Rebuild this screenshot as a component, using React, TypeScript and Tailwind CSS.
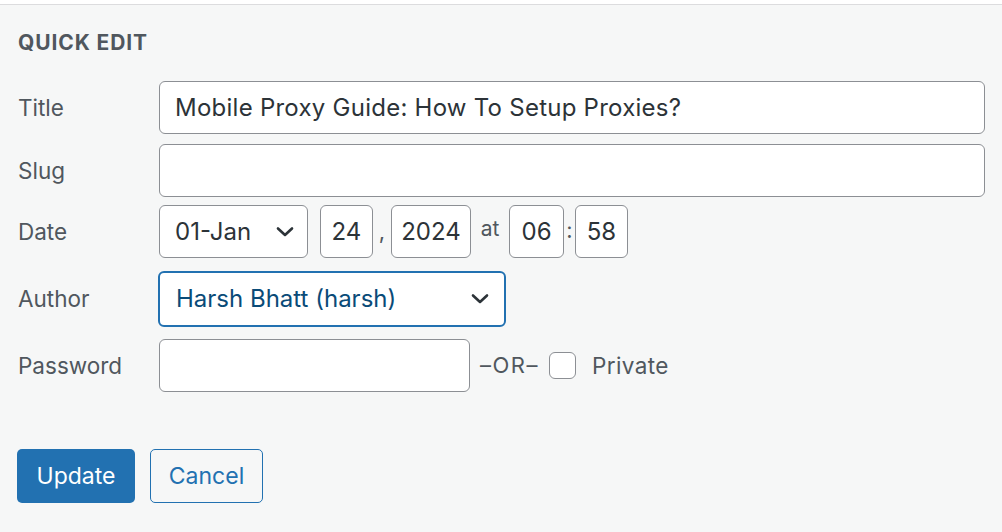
import { JSX } from "react";

function Chevron({ color = "#2c3338" }: { color?: string }): JSX.Element {
  return (
    <svg width="20" height="12" viewBox="0 0 20 12" fill="none" className="shrink-0">
      <path d="M3 2.5 L10 9 L17 2.5" stroke={color} strokeWidth="2.6" strokeLinecap="round" strokeLinejoin="round" />
    </svg>
  );
}

function Box({ w, children }: { w: string; children?: React.ReactNode }): JSX.Element {
  return (
    <div className={`${w} h-[53px] flex items-center justify-center bg-white border border-[#8c8f94] rounded-[6px] text-[24px] text-[#2c3338]`}>
      {children}
    </div>
  );
}

export default function App(): JSX.Element {
  return (
    <div
      className="w-[1002px] h-[532px] bg-white pt-[4px]"
      style={{ fontFamily: "Inter, 'Noto Sans', 'Liberation Sans', sans-serif" }}
    >
      <div className="h-full bg-[#f6f7f7] border-t border-[#dcdcde] pl-[18px] pr-[17px]">
        <div className="pt-[22px] h-[76px] text-[21px] font-bold text-[#50575e] tracking-[0.9px]">
          QUICK EDIT
        </div>

        {/* Title */}
        <div className="flex items-center">
          <div className="w-[141px] text-[22.5px] text-[#50575e]">Title</div>
          <div className="flex-1 h-[53px] flex items-center pl-[15px] bg-white border border-[#8c8f94] rounded-[6px] text-[24px] tracking-[0.25px] text-[#2c3338]">
            Mobile Proxy Guide: How To Setup Proxies?
          </div>
        </div>

        {/* Slug */}
        <div className="flex items-center mt-[10px]">
          <div className="w-[141px] text-[22.5px] text-[#50575e]">Slug</div>
          <div className="flex-1 h-[53px] bg-white border border-[#8c8f94] rounded-[6px]" />
        </div>

        {/* Date */}
        <div className="flex items-center mt-[8px]">
          <div className="w-[141px] text-[22.5px] text-[#50575e]">Date</div>
          <div className="w-[149px] h-[53px] flex items-center justify-between pl-[15px] pr-[12px] bg-white border border-[#8c8f94] rounded-[6px] text-[24px] text-[#2c3338]">
            <span>01-Jan</span>
            <Chevron />
          </div>
          <div className="ml-[12px]">
            <Box w="w-[53px]">24</Box>
          </div>
          <span className="w-[18px] text-center text-[22px] text-[#50575e]">,</span>
          <Box w="w-[80px]">2024</Box>
          <span className="w-[38px] text-center text-[21px] text-[#50575e] pb-[6px]">at</span>
          <Box w="w-[55px]">06</Box>
          <span className="w-[11px] text-center text-[22px] text-[#50575e] pb-[2px]">:</span>
          <Box w="w-[53px]">58</Box>
        </div>

        {/* Author */}
        <div className="flex items-center mt-[13px]">
          <div className="w-[140px] text-[22.5px] text-[#50575e]">Author</div>
          <div className="w-[348px] h-[56px] flex items-center justify-between pl-[16px] pr-[14px] bg-white border-2 border-[#2271b1] rounded-[6px] text-[24px] text-[#0a4b78]">
            <span>Harsh Bhatt (harsh)</span>
            <Chevron />
          </div>
        </div>

        {/* Password */}
        <div className="flex items-center mt-[12px]">
          <div className="w-[141px] text-[22.5px] text-[#50575e]">Password</div>
          <div className="w-[311px] h-[53px] bg-white border border-[#8c8f94] rounded-[6px]" />
          <span className="ml-[10px] text-[22px] text-[#50575e] tracking-[1.5px]">–OR–</span>
          <div className="ml-[10px] w-[27px] h-[27px] bg-white border border-[#8c8f94] rounded-[6px]" />
          <span className="ml-[16px] text-[22.5px] tracking-[0.4px] text-[#50575e]">Private</span>
        </div>

        {/* Buttons */}
        <div className="flex items-center mt-[57px] gap-[15px] -ml-[1px]">
          <button className="w-[118px] h-[54px] bg-[#2271b1] text-white text-[23px] rounded-[5px]">Update</button>
          <button className="w-[113px] h-[54px] bg-[#f6f7f7] border border-[#2271b1] text-[#2271b1] text-[23px] rounded-[5px]">Cancel</button>
        </div>
      </div>
    </div>
  );
}
